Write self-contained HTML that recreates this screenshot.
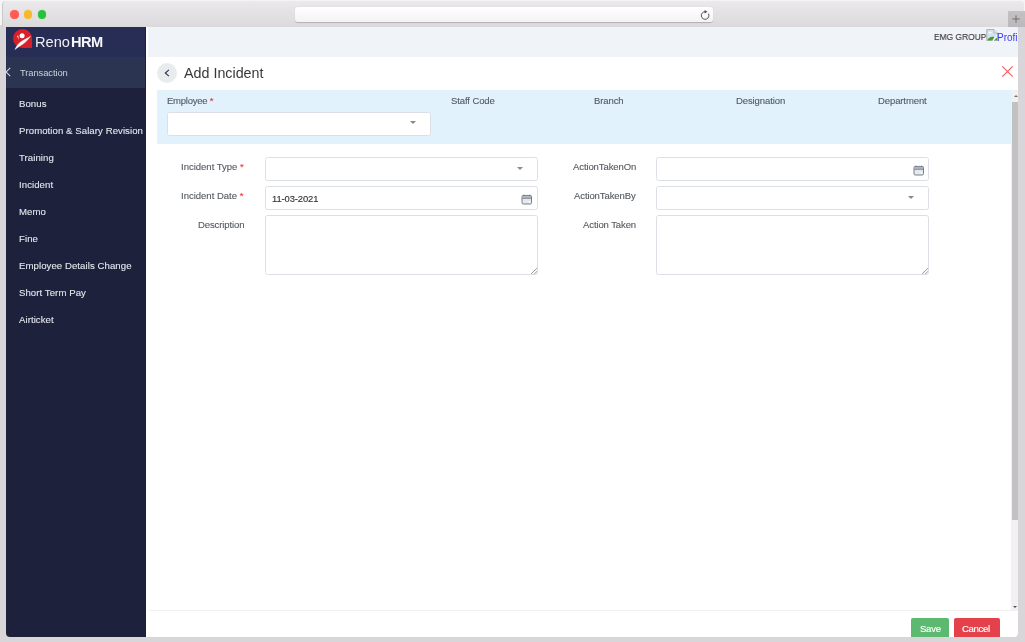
<!DOCTYPE html>
<html><head><meta charset="utf-8">
<style>
*{box-sizing:border-box;margin:0;padding:0}
html,body{width:1025px;height:642px;overflow:hidden;background:#d8d6d8;font-family:"Liberation Sans",sans-serif}
.a{position:absolute}
.t,.lbl,.mi{will-change:transform}
.lbl{-webkit-text-stroke:0.12px currentColor}
.mi{-webkit-text-stroke:0.1px currentColor}
.sk{-webkit-text-stroke:0.15px currentColor}
.t{position:absolute;white-space:nowrap;line-height:1}
#titlebar{left:0;top:0;width:1025px;height:24.5px;background:#f4f4f4}#tb2{left:1.5px;top:1.3px;width:1022px;height:25.7px;background:linear-gradient(#ebe9eb,#dbd9db);border-top-left-radius:4px;border-top-right-radius:4px;border-left:0.6px solid #c9c9c9}
.tl{position:absolute;width:8.4px;height:8.4px;border-radius:50%}
#url{left:295px;top:7.4px;width:418px;height:14.4px;border-radius:3px;background:linear-gradient(#ffffff,#f3f3f3);box-shadow:0 0.5px 0.9px rgba(0,0,0,0.2)}
#plus{left:1008px;top:11px;width:17px;height:16px;background:linear-gradient(#c4c2c4,#bab8ba)}
#view{left:6px;top:27px;width:1012px;height:610px;background:#fff;overflow:hidden;border-bottom-left-radius:4px;border-bottom-right-radius:4px}
#side{left:0;top:0;width:140.3px;height:610px;background:#1e213c;box-shadow:inset -0.7px 0 0 #191d48}
#logo{left:0;top:0;width:139.2px;height:29.5px;background:#282d55}
#trans{left:0;top:29.5px;width:139.2px;height:31.3px;background:#2b3450}
.mi{position:absolute;left:12.8px;font-size:9.6px;letter-spacing:0.07px;margin-top:0.75px;color:#e4e6ee;white-space:nowrap;line-height:1}
#hdr{left:142px;top:0;width:870px;height:29.5px;background:#f0f4f9}
.lbl{position:absolute;font-size:9.5px;letter-spacing:-0.1px;color:#555a60;white-space:nowrap;line-height:1}
.req{color:#e53935}
.inp{position:absolute;border:1px solid #dce0e6;border-radius:2.5px;background:#fff}
.caret{position:absolute;width:0;height:0;border-left:3.25px solid transparent;border-right:3.25px solid transparent;border-top:3.6px solid #8a8a8a}
</style></head><body>
<div id="titlebar" class="a"></div><div id="tb2" class="a"></div>
<div class="tl" style="left:10.2px;top:10.3px;background:#fd5d55;box-shadow:0 0 0 0.6px #f7c9c6"></div>
<div class="tl" style="left:23.9px;top:10.3px;background:#f6b82c;box-shadow:0 0 0 0.6px #f3dfae"></div>
<div class="tl" style="left:37.6px;top:10.3px;background:#27c13d;box-shadow:0 0 0 0.6px #bfe8c3"></div>
<div id="url" class="a"></div>
<svg class="a" style="left:699px;top:9px" width="12" height="12" viewBox="0 0 12 12"><path d="M6.2 2.7 A3.8 3.8 0 1 0 9.4 4.6" fill="none" stroke="#4a4a4a" stroke-width="0.95"/><path d="M5.6 0.9 L8.4 2.7 L5.6 4.5 Z" fill="#4a4a4a"/></svg>
<div id="plus" class="a"></div>
<svg class="a" style="left:1010.2px;top:12.9px" width="12" height="12" viewBox="0 0 12 12"><path d="M6 2.3 V9.7 M2.3 6 H9.7" stroke="#5a585a" stroke-width="0.75"/></svg>

<div id="view" class="a">
  <div id="side" class="a">
    <div id="logo" class="a"></div>
    <div id="trans" class="a"></div>
    <svg class="a" style="left:7px;top:2px" width="19" height="21" viewBox="0 0 19 21"><path d="M9.5 0 A9.5 9.5 0 0 1 19 9.5 V19 H9.5 A9.5 9.5 0 0 1 0 9.5 A9.5 9.5 0 0 1 9.5 0 Z" fill="#d91f27"/><circle cx="9.1" cy="6.7" r="2.5" fill="#fff"/><path d="M4.0 6.9 L5.1 6.5 L5.9 10.9 Z" fill="#fff"/><path d="M1.9 20.5 C3.5 17 6 13.5 9.1 12 C12 10.5 15 8.6 17.6 7.2 C15 10.5 13 13 10.3 14.8 C7.5 16.6 4.8 18.3 1.9 20.5 Z" fill="#fff" stroke="#fff" stroke-width="0.4" stroke-linejoin="round"/></svg>
    <div class="t" style="left:28.9px;top:8.4px;font-size:14.6px;color:#f0f0f5;letter-spacing:0px">Reno</div>
    <div class="t" style="left:65.4px;top:8.4px;font-size:14.6px;color:#f6f6fa;font-weight:bold;letter-spacing:-0.5px">HRM</div>
    <svg class="a" style="left:-1px;top:40px" width="6" height="10" viewBox="0 0 6 10"><path d="M5.2 0.8 L1 5 L5.2 9.2" fill="none" stroke="#d0d6e6" stroke-width="1.1"/></svg>
    <div class="t" style="left:13.6px;top:40.5px;font-size:9.4px;letter-spacing:-0.08px;color:#cdd0dc">Transaction</div>
    <div class="mi" style="top:71.6px">Bonus</div>
    <div class="mi" style="top:98.6px">Promotion &amp; Salary Revision</div>
    <div class="mi" style="top:125.6px">Training</div>
    <div class="mi" style="top:152.6px">Incident</div>
    <div class="mi" style="top:179.6px">Memo</div>
    <div class="mi" style="top:206.6px">Fine</div>
    <div class="mi" style="top:233.6px">Employee Details Change</div>
    <div class="mi" style="top:260.6px">Short Term Pay</div>
    <div class="mi" style="top:287.6px">Airticket</div>
  </div>
  <div id="hdr" class="a"></div>
  <div class="t sk" style="left:927.6px;top:5px;font-size:9.5px;color:#3a3a3a;transform:scaleX(0.885);transform-origin:0 0">EMG GROUP</div>
  <svg class="a" style="left:979.5px;top:2px" width="12" height="12" viewBox="0 0 12 12"><path d="M0.75 0.6 H8 L11.4 4 V11.6 H0.75 Z" fill="#d3e2f7" stroke="#a8a8a8" stroke-width="0.9"/><ellipse cx="4" cy="3.6" rx="2" ry="0.8" fill="#f4f8fd"/><path d="M1.2 11.2 C2.5 8 5.5 7 8.6 8 L6.4 11.2 Z" fill="#3ca41a"/><path d="M8.4 11.2 L10 9.3 H11 V11.2 Z" fill="#3ca41a"/><path d="M10.9 6.2 L6.9 11.9" stroke="#f6f8fb" stroke-width="1.1"/><path d="M8 0.6 V4 H11.4" fill="#ececec" stroke="#a8a8a8" stroke-width="0.7"/></svg>
  <div class="t" style="left:990.7px;top:5.5px;font-size:10px;color:#3a3af0">Profile</div>

  <div class="a" style="left:150.8px;top:36.4px;width:20px;height:20px;border-radius:50%;background:#e9ecef"></div>
  <svg class="a" style="left:156px;top:41px" width="10" height="10" viewBox="0 0 10 10"><path d="M6.9 1.9 L3.3 5 L6.9 8.1" fill="none" stroke="#2e3350" stroke-width="1.15"/></svg>
  <div class="t" style="left:178.2px;top:39.3px;font-size:14.3px;color:#383838">Add Incident</div>
  <svg class="a" style="left:995px;top:37.9px" width="13" height="13" viewBox="0 0 13 13"><path d="M1.3 1.3 L11.7 11.7 M11.7 1.3 L1.3 11.7" stroke="#f25e66" stroke-width="1.15"/></svg>

  <div class="a" style="left:150.7px;top:62.9px;width:854px;height:54.1px;background:#e1f2fc"></div>
  <div class="lbl" style="left:160.5px;top:68.6px;letter-spacing:-0.25px">Employee <span class="req">*</span></div>
  <div class="lbl" style="left:445px;top:68.6px">Staff Code</div>
  <div class="lbl" style="left:587.5px;top:68.6px">Branch</div>
  <div class="lbl" style="left:729.8px;top:68.6px">Designation</div>
  <div class="lbl" style="left:872px;top:68.6px">Department</div>
  <div class="inp" style="left:160.9px;top:85.2px;width:264.2px;height:23.4px"></div>
  <div class="caret" style="left:404.1px;top:93.8px"></div>

  <div class="lbl" style="right:774.2px;top:135.3px;letter-spacing:0">Incident Type <span class="req">*</span></div>
  <div class="lbl" style="right:774.2px;top:164.0px;letter-spacing:0">Incident Date <span class="req">*</span></div>
  <div class="lbl" style="right:773.5px;top:193.0px">Description</div>
  <div class="inp" style="left:259.4px;top:130.3px;width:272.3px;height:23.5px"></div>
  <div class="caret" style="left:511.4px;top:139.8px"></div>
  <div class="inp" style="left:259.4px;top:159.4px;width:272.3px;height:23.4px"></div>
  <div class="t sk" style="left:265.9px;top:166.9px;font-size:9.4px;letter-spacing:-0.1px;color:#333">11-03-2021</div>
  <svg class="a cal" style="left:515px;top:166.5px" width="12" height="11" viewBox="0 0 12 11"><rect x="1" y="1.4" width="9.5" height="8.6" rx="1.3" fill="#e6e8ed" stroke="#6e7686" stroke-width="0.95"/><rect x="1.5" y="1.9" width="8.5" height="2" fill="#b0b5be"/><path d="M1.2 4.3 H10.3" stroke="#6e7686" stroke-width="0.85"/><rect x="7.8" y="7.4" width="1.4" height="1.4" fill="#fff"/><rect x="2.1" y="0.7" width="1.4" height="1.4" rx="0.5" fill="#6e7686"/><rect x="8" y="0.7" width="1.4" height="1.4" rx="0.5" fill="#6e7686"/></svg>
  <textarea class="inp" style="left:259.4px;top:188.2px;width:272.3px;height:60.2px;resize:none"></textarea>
  <svg class="a" style="left:524px;top:240px" width="8" height="8" viewBox="0 0 8 8"><path d="M1.1 6.9 L7 1.2 M4.1 7.1 L7 4.4" stroke="#8c8c8c" stroke-width="0.9"/></svg>

  <div class="lbl" style="right:382px;top:135.3px">ActionTakenOn</div>
  <div class="lbl" style="right:382px;top:164.0px">ActionTakenBy</div>
  <div class="lbl" style="right:382px;top:193.0px">Action Taken</div>
  <div class="inp" style="left:650.4px;top:130.3px;width:272.2px;height:23.5px"></div>
  <svg class="a cal" style="left:906.5px;top:137.7px" width="12" height="11" viewBox="0 0 12 11"><rect x="1" y="1.4" width="9.5" height="8.6" rx="1.3" fill="#e6e8ed" stroke="#6e7686" stroke-width="0.95"/><rect x="1.5" y="1.9" width="8.5" height="2" fill="#b0b5be"/><path d="M1.2 4.3 H10.3" stroke="#6e7686" stroke-width="0.85"/><rect x="7.8" y="7.4" width="1.4" height="1.4" fill="#fff"/><rect x="2.1" y="0.7" width="1.4" height="1.4" rx="0.5" fill="#6e7686"/><rect x="8" y="0.7" width="1.4" height="1.4" rx="0.5" fill="#6e7686"/></svg>
  <div class="inp" style="left:650.4px;top:159.4px;width:272.2px;height:23.4px"></div>
  <div class="caret" style="left:902.4px;top:168.5px"></div>
  <textarea class="inp" style="left:650.4px;top:188.2px;width:272.2px;height:60.2px;resize:none"></textarea>
  <svg class="a" style="left:915px;top:240px" width="8" height="8" viewBox="0 0 8 8"><path d="M1.1 6.9 L7 1.2 M4.1 7.1 L7 4.4" stroke="#8c8c8c" stroke-width="0.9"/></svg>

  <div class="a" style="left:1004.6px;top:63px;width:8px;height:520.7px;background:#f1f1f1"></div>
  <div class="a" style="left:1005.9px;top:74.8px;width:7px;height:418.6px;background:#c1c1c1"></div>
  <div class="a" style="left:1007.6px;top:68.2px;width:0;height:0;border-left:2.8px solid transparent;border-right:2.8px solid transparent;border-bottom:2.8px solid #707070"></div>
  <div class="a" style="left:1007.3px;top:578.6px;width:0;height:0;border-left:2.8px solid transparent;border-right:2.8px solid transparent;border-top:2.8px solid #505050"></div>

  <div class="a" style="left:142.5px;top:583px;width:870px;height:1px;background:#f0f0f0"></div>
  <div class="a" style="left:905.1px;top:590.7px;width:37.7px;height:24px;background:#5cb96f;border-radius:2px"></div>
  <div class="t sk" style="left:913.5px;top:596.5px;font-size:9.6px;color:#fff;letter-spacing:-0.3px">Save</div>
  <div class="a" style="left:948.2px;top:590.7px;width:45.6px;height:24px;background:#e4414a;border-radius:2px"></div>
  <div class="t sk" style="left:956.3px;top:596.5px;font-size:9.6px;color:#fff;letter-spacing:-0.35px">Cancel</div>
</div>
</body></html>
